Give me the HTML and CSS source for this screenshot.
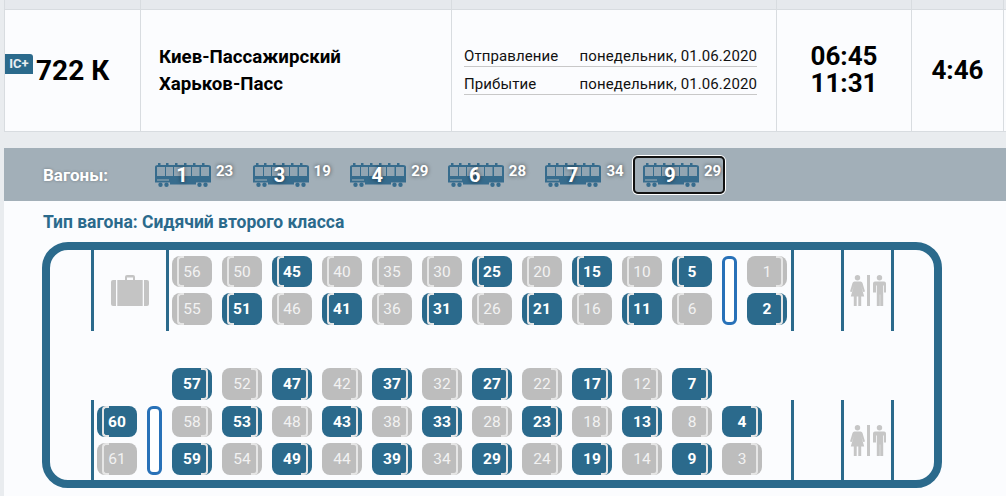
FILE: index.html
```html
<!DOCTYPE html>
<html lang="ru">
<head>
    <meta charset="UTF-8">
    <meta name="viewport" content="width=device-width, initial-scale=1.0">
    <title>Вагоны</title>
    <link rel="stylesheet" href="styles.css">
</head>
<body>
    <svg class="defs" width="0" height="0">
        <symbol id="train" viewBox="0 0 56 25">
            <path fill="#376c8d" d="M3 3V1h2.500v2H11V1h2.500v2H20V1h2.500v2H29V1h2.500v2H38V1h2.500v2H47V1h2.500v2H53q3 0 3 2V16H0V5q0-2 3-2z"/>
            <g fill="#a2afb8" fill-opacity=".85">
                <rect x="2" y="5" width="8" height="9"/>
                <rect x="11" y="5" width="7" height="9"/>
                <rect x="19" y="5" width="8" height="9"/>
                <rect x="28" y="5" width="8" height="9"/>
                <rect x="37" y="5" width="7.500" height="9"/>
                <rect x="46" y="5" width="8" height="9"/>
            </g>
            <path fill="#376c8d" d="M0 16h56v4.500H0zM15 20h26v2.500H15z"/>
            <rect x="2" y="17.500" width="12" height="1" fill="#a2afb8"/>
            <g fill="#376c8d">
                <circle cx="5.500" cy="22.800" r="2.200"/>
                <circle cx="11.500" cy="22.800" r="2.200"/>
                <circle cx="44.500" cy="22.800" r="2.200"/>
                <circle cx="50.500" cy="22.800" r="2.200"/>
            </g>
        </symbol>
        <symbol id="wc" viewBox="0 0 36 31">
            <g fill="#c6c6c6">
                <circle cx="7.500" cy="2.700" r="2.700"/>
                <path d="M4.500 6.500h6q1.500 0 2 1.500L15 16.500l-1.800.6-2-6 3 10.400H11.200V31H8.300V21.500H6.700V31H3.800V21.500H.8l3-10.400-2 6-1.800-.6L2.500 8q.5-1.500 2-1.500z"/>
                <rect x="17" y="0" width="3" height="31"/>
                <circle cx="29.500" cy="2.700" r="2.700"/>
                <path d="M25 6.500h9q2 0 2 2v9h-2v-7h-.8V31h-3V19.500h-.4V31h-3V10.500H26v7h-3v-9q0-2 2-2z"/>
            </g>
        </symbol>
    </svg>

    <section class="trip">
        <span class="trip-top"></span>
        <span class="trip-top"></span>
        <span class="trip-top"></span>
        <span class="trip-top"></span>
        <span class="trip-top"></span>
        <span class="trip-top"></span>

        <div class="cell cell-number">
            <span class="badge">IC+</span>
            <span class="number">722 К</span>
        </div>
        <div class="cell cell-route">
            <p>Киев-Пассажирский</p>
            <p>Харьков-Пасс</p>
        </div>
        <div class="cell cell-dates">
            <p class="date-row"><span>Отправление</span><span>понедельник, 01.06.2020</span></p>
            <p class="date-row"><span>Прибытие</span><span>понедельник, 01.06.2020</span></p>
        </div>
        <div class="cell cell-time">
            <p>06:45</p>
            <p>11:31</p>
        </div>
        <div class="cell cell-time">
            <p>4:46</p>
        </div>
        <div class="cell"></div>
    </section>

    <section class="wagons">
        <header class="wagon-bar">
            <span class="wagon-label">Вагоны:</span>
            <div class="wagon-list">
                <a class="wagon"><svg class="train"><use href="#train"/></svg><b class="wagon-no">1</b><b class="wagon-free">23</b></a>
                <a class="wagon"><svg class="train"><use href="#train"/></svg><b class="wagon-no">3</b><b class="wagon-free">19</b></a>
                <a class="wagon"><svg class="train"><use href="#train"/></svg><b class="wagon-no">4</b><b class="wagon-free">29</b></a>
                <a class="wagon"><svg class="train"><use href="#train"/></svg><b class="wagon-no">6</b><b class="wagon-free">28</b></a>
                <a class="wagon"><svg class="train"><use href="#train"/></svg><b class="wagon-no">7</b><b class="wagon-free">34</b></a>
                <a class="wagon active"><svg class="train"><use href="#train"/></svg><b class="wagon-no">9</b><b class="wagon-free">29</b></a>
            </div>
        </header>

        <h2 class="wagon-type">Тип вагона: Сидячий второго класса</h2>

        <div class="car">
            <div class="deck deck-top">
                <div class="part part-end"></div>
                <div class="part part-luggage">
                    <svg class="suitcase" viewBox="0 0 38 31">
                        <path fill="#c4c4c4" fill-rule="evenodd" d="M14 5V2q0-2 2-2h6q2 0 2 2v3h12q2 0 2 2v22q0 2-2 2H2q-2 0-2-2V7q0-2 2-2zM16 5h6V2.500h-6zM5 5v26h1.300V5zM31.700 5v26H33V5z"/>
                    </svg>
                </div>
                <div class="seats seats-top">
                    <div class="seat left">56</div>
                    <div class="seat left">50</div>
                    <div class="seat left free">45</div>
                    <div class="seat left">40</div>
                    <div class="seat left">35</div>
                    <div class="seat left">30</div>
                    <div class="seat left free">25</div>
                    <div class="seat left">20</div>
                    <div class="seat left free">15</div>
                    <div class="seat left">10</div>
                    <div class="seat left free">5</div>
                    <div class="door"></div>
                    <div class="seat right">1</div>
                    <div class="seat left">55</div>
                    <div class="seat left free">51</div>
                    <div class="seat left">46</div>
                    <div class="seat left free">41</div>
                    <div class="seat left">36</div>
                    <div class="seat left free">31</div>
                    <div class="seat left">26</div>
                    <div class="seat left free">21</div>
                    <div class="seat left">16</div>
                    <div class="seat left free">11</div>
                    <div class="seat left">6</div>
                    <div class="seat right free">2</div>
                </div>
                <div class="part part-aisle"></div>
                <div class="part part-wc"><svg class="wc"><use href="#wc"/></svg></div>
                <div class="part part-last"></div>
            </div>

            <div class="deck deck-low">
                <div class="part part-end"></div>
                <div class="seats seats-low">
                    <div class="skip"></div>
                    <div class="seat right free">57</div>
                    <div class="seat right">52</div>
                    <div class="seat right free">47</div>
                    <div class="seat right">42</div>
                    <div class="seat right free">37</div>
                    <div class="seat right">32</div>
                    <div class="seat right free">27</div>
                    <div class="seat right">22</div>
                    <div class="seat right free">17</div>
                    <div class="seat right">12</div>
                    <div class="seat right free">7</div>
                    <div class="skip-one"></div>
                    <div class="seat left free">60</div>
                    <div class="door"></div>
                    <div class="seat right">58</div>
                    <div class="seat right free">53</div>
                    <div class="seat right">48</div>
                    <div class="seat right free">43</div>
                    <div class="seat right">38</div>
                    <div class="seat right free">33</div>
                    <div class="seat right">28</div>
                    <div class="seat right free">23</div>
                    <div class="seat right">18</div>
                    <div class="seat right free">13</div>
                    <div class="seat right">8</div>
                    <div class="seat right free">4</div>
                    <div class="seat left">61</div>
                    <div class="seat right free">59</div>
                    <div class="seat right">54</div>
                    <div class="seat right free">49</div>
                    <div class="seat right">44</div>
                    <div class="seat right free">39</div>
                    <div class="seat right">34</div>
                    <div class="seat right free">29</div>
                    <div class="seat right">24</div>
                    <div class="seat right free">19</div>
                    <div class="seat right">14</div>
                    <div class="seat right free">9</div>
                    <div class="seat right">3</div>
                </div>
                <div class="part part-aisle"></div>
                <div class="part part-wc"><svg class="wc"><use href="#wc"/></svg></div>
                <div class="part part-last"></div>
            </div>
        </div>
    </section>
</body>
</html>
```

FILE: styles.css
```css
*,*::before,*::after
{
    box-sizing: border-box;
}
body
{
    margin: 0;
    height: 496px;
    overflow: hidden;
    background-color: #e9ecef;
    font-family: Roboto, "Noto Sans", sans-serif;
    color: #000;
}
p
{
    margin: 0;
}
.defs
{
    position: absolute;
}

/* trip row */
.trip
{
    display: grid;
    grid-template-columns: 136px 311px 325px 135px 92px 1fr;
    grid-template-rows: 10px 121px;
    margin-left: 4px;
    height: 132px;
    border-bottom: 1px solid #d8dce0;
}
.trip-top
{
    background-color: #e6e9ed;
    border-left: 1px solid #d8dce0;
    border-bottom: 1px solid #d8dce0;
}
.cell
{
    display: flex;
    flex-direction: column;
    justify-content: center;
    background-color: #fbfcfe;
    border-left: 1px solid #d8dce0;
}
.cell-number
{
    flex-direction: row;
    justify-content: flex-start;
    align-items: center;
}
.badge
{
    align-self: flex-start;
    margin-top: 44px;
    width: 28px;
    height: 20px;
    line-height: 20px;
    text-align: center;
    background-color: #2b6a8c;
    border-radius: 0 3px 0 0;
    color: #e8eef2;
    font-size: 13px;
    font-weight: 700;
}
.number
{
    margin-left: 3px;
    font-size: 28px;
    font-weight: 700;
}
.cell-route
{
    padding: 1px 0 0 18px;
    font-size: 18.700px;
    font-weight: 700;
    line-height: 27px;
}
.cell-dates
{
    padding: 0 19px 7px 12px;
    font-size: 15px;
    letter-spacing: .1px;
    color: #111;
}
.date-row
{
    display: flex;
    justify-content: space-between;
    height: 28px;
    padding-top: 8px;
    line-height: 19px;
    border-bottom: 1px solid #c8c8c8;
}
.cell-time
{
    align-items: center;
    padding-bottom: 1px;
    font-size: 26px;
    font-weight: 700;
    line-height: 27px;
}

/* wagons */
.wagons
{
    margin: 16px 0 0 4px;
    height: 348px;
    background-color: #fbfcfe;
}
.wagon-bar
{
    display: flex;
    align-items: center;
    height: 53px;
    padding-left: 39px;
    background-color: #a2afb8;
}
.wagon-label
{
    width: 102px;
    color: #fff;
    font-size: 17px;
    font-weight: 700;
    text-shadow: 0 0 3px rgba(0, 0, 0, .3);
}
.wagon-list
{
    display: flex;
    gap: 5.600px;
}
.wagon
{
    position: relative;
    display: block;
    width: 92px;
    height: 38px;
    border: 2px solid transparent;
    border-radius: 5px;
}
.wagon.active
{
    border-color: #111;
    box-shadow: 0 0 0 1px #fff;
}
.train
{
    position: absolute;
    left: 8px;
    top: 4px;
    width: 56px;
    height: 25px;
}
.wagon-no
{
    position: absolute;
    left: 7px;
    top: 4px;
    width: 56px;
    text-align: center;
    color: #fff;
    font-size: 20px;
    line-height: 26px;
    text-shadow: 0 0 4px rgba(0, 0, 0, .6);
}
.wagon-free
{
    position: absolute;
    left: 69px;
    top: 4px;
    color: #fff;
    font-size: 15px;
    line-height: 18px;
    text-shadow: 0 0 4px rgba(0, 0, 0, .6);
}
.wagon-type
{
    margin: 12px 0 0 39px;
    color: #2b6a8c;
    font-size: 17.500px;
    font-weight: 700;
    line-height: 19px;
}

/* car plan */
.car
{
    width: 900px;
    height: 246px;
    margin: 10px 0 0 38px;
    border: 8px solid #2b6a8c;
    border-radius: 26px;
}
.deck
{
    display: flex;
}
.deck-top
{
    height: 81px;
}
.deck-low
{
    height: 112px;
    margin-top: 37px;
}
.part
{
    display: flex;
    justify-content: center;
    align-items: center;
    height: 80px;
    align-self: flex-end;
}
.deck-top .part
{
    height: 81px;
}
.part-end
{
    flex: 0 0 44px;
    border-right: 3px solid #2b6a8c;
}
.part-luggage
{
    flex: 0 0 75px;
    border-right: 3px solid #2b6a8c;
}
.part-aisle
{
    flex: 0 0 50px;
    border-left: 3px solid #2b6a8c;
}
.part-wc
{
    flex: 0 0 50px;
    border-left: 3px solid #2b6a8c;
}
.part-last
{
    flex: 0 0 43px;
    border-left: 3px solid #2b6a8c;
}
.suitcase
{
    width: 38px;
    height: 31px;
}
.wc
{
    width: 36px;
    height: 31px;
}
.seats
{
    display: grid;
    flex: 1;
    column-gap: 10px;
    row-gap: 6px;
    align-content: start;
}
.seats-top
{
    grid-template-columns: repeat(11, 40px) 15px 40px;
    grid-template-rows: 31px 32px;
    padding: 6px 0 0 3px;
}
.seats-low
{
    grid-template-columns: 40px 15px repeat(12, 40px);
    grid-template-rows: 32px 31px 32px;
    padding-left: 3px;
}
.skip
{
    grid-column: span 2;
}
.door
{
    grid-row: span 2;
    background-color: #fff;
    border: 3px solid #2871b8;
    border-radius: 6px;
}
.seat
{
    position: relative;
    display: flex;
    justify-content: center;
    align-items: center;
    background-color: #bdbdbd;
    border-radius: 8px;
    color: #f2f2f2;
    font-size: 15.500px;
}
.seat.free
{
    background-color: #2b6a8c;
    color: #fff;
    font-weight: 700;
}
.seat::before
{
    content: "";
    position: absolute;
    top: 0;
    bottom: 0;
    width: 7px;
    border: 2px solid #e6e6e6;
}
.seat.left::before
{
    left: 5px;
    border-right: 0;
    border-radius: 4px 0 0 4px;
}
.seat.right::before
{
    right: 4px;
    border-left: 0;
    border-radius: 0 4px 4px 0;
}
```
